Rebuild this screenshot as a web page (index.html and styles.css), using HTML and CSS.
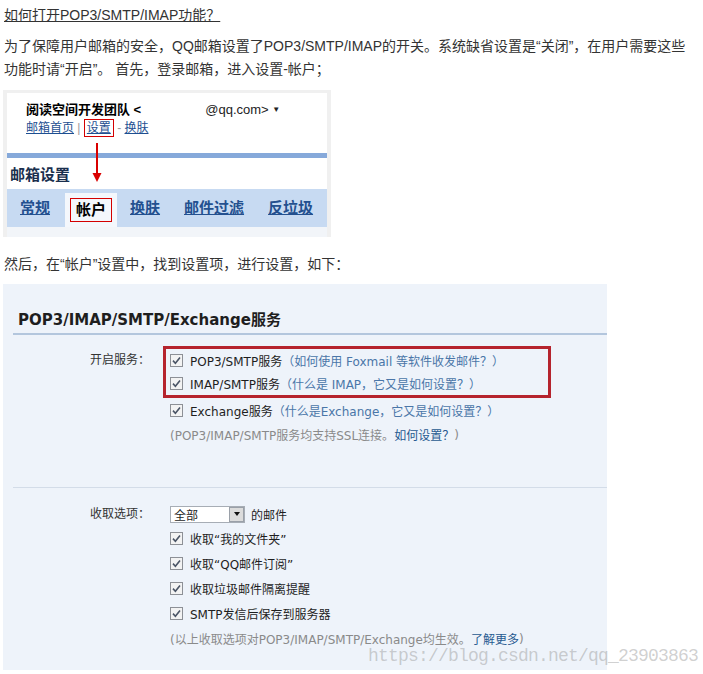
FILE: index.html
```html
<!DOCTYPE html>
<html lang="zh-CN">
<head>
<meta charset="utf-8">
<title>如何打开POP3/SMTP/IMAP功能？</title>
<link rel="stylesheet" href="styles.css">
</head>
<body>
<h1 class="title">如何打开POP3/SMTP/IMAP功能？</h1>
<p class="para">为了保障用户邮箱的安全，QQ邮箱设置了POP3/SMTP/IMAP的开关。系统缺省设置是“关闭”，在用户需要这些<br>功能时请“开启”。 首先，登录邮箱，进入设置-帐户；</p>

<div class="shot1">
  <div class="s1-head">
    <div class="s1-name"><span>阅读空间开发团队 &lt;</span><span class="s1-mail">@qq.com&gt; <span class="s1-caret">▼</span></span></div>
    <div class="s1-links"><a>邮箱首页</a> | <a class="boxed">设置</a> - <a>换肤</a></div>
  </div>
  <div class="s1-bar"></div>
  <div class="s1-title">邮箱设置</div>
  <div class="s1-tabs">
    <a class="tab">常规</a>
    <span class="tab-active"><span class="boxed2">帐户</span></span>
    <a class="tab">换肤</a>
    <a class="tab">邮件过滤</a>
    <a class="tab">反垃圾</a>
  </div>
  <div class="s1-foot"></div>
  <svg class="arrow" width="10" height="40" viewBox="0 0 10 40"><line x1="5" y1="0" x2="5" y2="31" stroke="#d90000" stroke-width="2"/><polygon points="0.5,30 9.5,30 5,39" fill="#d90000"/></svg>
</div>

<p class="para para2">然后，在“帐户”设置中，找到设置项，进行设置，如下：</p>

<div class="shot2">
  <div class="s2-head">POP3/IMAP/SMTP/Exchange服务</div>
  <div class="s2-section s2-first">
    <div class="s2-label s2-label-top">开启服务：</div>
    <div class="s2-body">
      <div class="redbox">
        <div class="row"><svg class="cb" width="13" height="13" viewBox="0 0 13 13"><rect x="0.5" y="0.5" width="12" height="12" fill="#f3f3f3" stroke="#8d9096"/><path d="M3 6.6 L5.4 9.2 L10 3.6" fill="none" stroke="#4b5566" stroke-width="1.6"/></svg><span class="item">POP3/SMTP服务</span><span class="hint">（如何使用 Foxmail 等软件收发邮件？）</span></div>
        <div class="row"><svg class="cb" width="13" height="13" viewBox="0 0 13 13"><rect x="0.5" y="0.5" width="12" height="12" fill="#f3f3f3" stroke="#8d9096"/><path d="M3 6.6 L5.4 9.2 L10 3.6" fill="none" stroke="#4b5566" stroke-width="1.6"/></svg><span class="item">IMAP/SMTP服务</span><span class="hint">（什么是 IMAP，它又是如何设置？）</span></div>
      </div>
      <div class="row row-out row-24"><svg class="cb" width="13" height="13" viewBox="0 0 13 13"><rect x="0.5" y="0.5" width="12" height="12" fill="#f3f3f3" stroke="#8d9096"/><path d="M3 6.6 L5.4 9.2 L10 3.6" fill="none" stroke="#4b5566" stroke-width="1.6"/></svg><span class="item">Exchange服务</span><span class="hint">（什么是Exchange，它又是如何设置？）</span></div>
      <div class="row row-out row-25 note">(POP3/IMAP/SMTP服务均支持SSL连接。<a class="link">如何设置？</a>)</div>
    </div>
  </div>
  <div class="s2-sep"></div>
  <div class="s2-section s2-second">
    <div class="s2-label">收取选项：</div>
    <div class="s2-body">
      <div class="row row-out row-24"><span class="select"><span class="sel-text">全部</span><span class="sel-btn"><span class="sel-tri"></span></span></span><span class="item">的邮件</span></div>
      <div class="row row-out row-25"><svg class="cb" width="13" height="13" viewBox="0 0 13 13"><rect x="0.5" y="0.5" width="12" height="12" fill="#f3f3f3" stroke="#8d9096"/><path d="M3 6.6 L5.4 9.2 L10 3.6" fill="none" stroke="#4b5566" stroke-width="1.6"/></svg><span class="item">收取“我的文件夹”</span></div>
      <div class="row row-out row-25"><svg class="cb" width="13" height="13" viewBox="0 0 13 13"><rect x="0.5" y="0.5" width="12" height="12" fill="#f3f3f3" stroke="#8d9096"/><path d="M3 6.6 L5.4 9.2 L10 3.6" fill="none" stroke="#4b5566" stroke-width="1.6"/></svg><span class="item">收取“QQ邮件订阅”</span></div>
      <div class="row row-out row-25"><svg class="cb" width="13" height="13" viewBox="0 0 13 13"><rect x="0.5" y="0.5" width="12" height="12" fill="#f3f3f3" stroke="#8d9096"/><path d="M3 6.6 L5.4 9.2 L10 3.6" fill="none" stroke="#4b5566" stroke-width="1.6"/></svg><span class="item">收取垃圾邮件隔离提醒</span></div>
      <div class="row row-out row-25"><svg class="cb" width="13" height="13" viewBox="0 0 13 13"><rect x="0.5" y="0.5" width="12" height="12" fill="#f3f3f3" stroke="#8d9096"/><path d="M3 6.6 L5.4 9.2 L10 3.6" fill="none" stroke="#4b5566" stroke-width="1.6"/></svg><span class="item">SMTP发信后保存到服务器</span></div>
      <div class="row row-out row-25 note">(以上收取选项对POP3/IMAP/SMTP/Exchange均生效。<a class="link">了解更多</a>)</div>
    </div>
  </div>
  <div class="watermark">https://blog.csdn.net/qq_23903863</div>
</div>
</body>
</html>
```
FILE: styles.css
```css
html, body {
  margin: 0;
  background: #fff;
}
body {
  padding: 0 4px;
  font-family: "Liberation Sans", "Noto Sans CJK SC", sans-serif;
  color: #333;
}
.title {
  margin: 4px 0 0;
  font-size: 14px;
  font-weight: normal;
  line-height: 23px;
  color: #333;
  text-decoration: underline;
}
.para {
  margin: 8px 0 0;
  font-size: 14px;
  line-height: 23px;
  color: #333;
}
.para2 {
  margin-top: 16px;
}

/* first screenshot */
.shot1 {
  position: relative;
  margin: 9px 0 0 -1px;
  width: 320px;
  padding: 3px 4px 0;
  background: #f0f0f0;
}
.s1-head {
  box-sizing: border-box;
  height: 60px;
  padding: 8px 0 0 19px;
  background: #fff;
}
.s1-name {
  display: flex;
  font-size: 13px;
  line-height: 18px;
  font-weight: bold;
  color: #000;
}
.s1-mail {
  margin-left: 64px;
  font-weight: normal;
  color: #222;
}
.s1-caret {
  font-size: 8px;
  vertical-align: 2px;
}
.s1-links {
  font-size: 12px;
  line-height: 18px;
  color: #999;
}
.s1-links a {
  color: #1e4f91;
  text-decoration: underline;
}
.s1-links .boxed {
  border: 1px solid #d40000;
  padding: 1px 2px;
}
.s1-bar {
  height: 5px;
  background: #86a9da;
}
.s1-title {
  height: 31px;
  line-height: 33px;
  padding-left: 3px;
  background: #fff;
  font-size: 15px;
  font-weight: bold;
  color: #1a2f4e;
}
.s1-tabs {
  display: flex;
  align-items: flex-end;
  gap: 24px;
  height: 38px;
  padding-left: 13px;
  background: #c7daf2;
}
.tab {
  align-self: center;
  font-size: 15px;
  font-weight: bold;
  line-height: 20px;
  color: #23508f;
  text-decoration: underline;
}
.tab-active {
  display: flex;
  align-items: center;
  justify-content: center;
  width: 52px;
  height: 34px;
  margin: 0 -11px 0 -9px;
  background: #f4f7fc;
}
.boxed2 {
  padding: 0 5px;
  border: 1px solid #d40000;
  font-size: 15px;
  font-weight: bold;
  line-height: 22px;
  color: #000;
}
.s1-foot {
  height: 10px;
  background: #f2f5f9;
}
.arrow {
  position: absolute;
  left: 89px;
  top: 53px;
}

/* second screenshot */
.shot2 {
  position: relative;
  margin: 8px 0 0 -1px;
  width: 594px;
  padding: 0 0 19px 10px;
  background: #eef3fa;
  font-family: "DejaVu Sans", "Noto Sans CJK SC", sans-serif;
  font-size: 12px;
}
.s2-head {
  padding: 27px 0 4px 5px;
  font-size: 15px;
  font-weight: bold;
  line-height: 18px;
  color: #1e1e1e;
  border-bottom: 2px solid #b3c6dd;
}
.s2-section {
  display: grid;
  grid-template-columns: 137px 1fr;
  column-gap: 13px;
}
.s2-first {
  padding-top: 11px;
}
.s2-second {
  padding-top: 14px;
}
.s2-label {
  text-align: right;
  line-height: 24px;
  color: #333;
}
.s2-label-top {
  padding-top: 3px;
  line-height: 23px;
}
.redbox {
  width: 374px;
  padding: 0 4px;
  border: 3px solid #b5232d;
}
.row {
  display: flex;
  align-items: center;
  height: 23px;
  white-space: nowrap;
}
.row-out {
  padding-left: 7px;
}
.row-24 {
  height: 24px;
}
.row-25 {
  height: 25px;
}
.cb {
  flex: none;
  margin-right: 7px;
}
.item {
  color: #1e1e1e;
}
.hint {
  color: #4a76a8;
}
.note {
  color: #8a8a8a;
}
.link {
  color: #275a90;
}
.s2-sep {
  margin-top: 40px;
  border-top: 1px solid #d3dce8;
}
.select {
  box-sizing: border-box;
  display: flex;
  align-items: center;
  width: 75px;
  height: 17px;
  margin-right: 6px;
  border: 1px solid #a7adb5;
  background: #fff;
}
.sel-text {
  padding-left: 3px;
  color: #1e1e1e;
}
.sel-btn {
  box-sizing: border-box;
  display: flex;
  align-items: center;
  justify-content: center;
  width: 15px;
  height: 15px;
  margin-left: auto;
  border: 1px solid #9aa0a8;
  background: #dcdcdc;
}
.sel-tri {
  width: 0;
  height: 0;
  border-left: 3px solid transparent;
  border-right: 3px solid transparent;
  border-top: 4px solid #111;
}
.watermark {
  position: absolute;
  left: 365px;
  top: 361px;
  font-family: "Liberation Mono", monospace;
  font-size: 18px;
  letter-spacing: -0.8px;
  line-height: 22px;
  color: rgba(150, 150, 150, 0.45);
  white-space: nowrap;
}
```
